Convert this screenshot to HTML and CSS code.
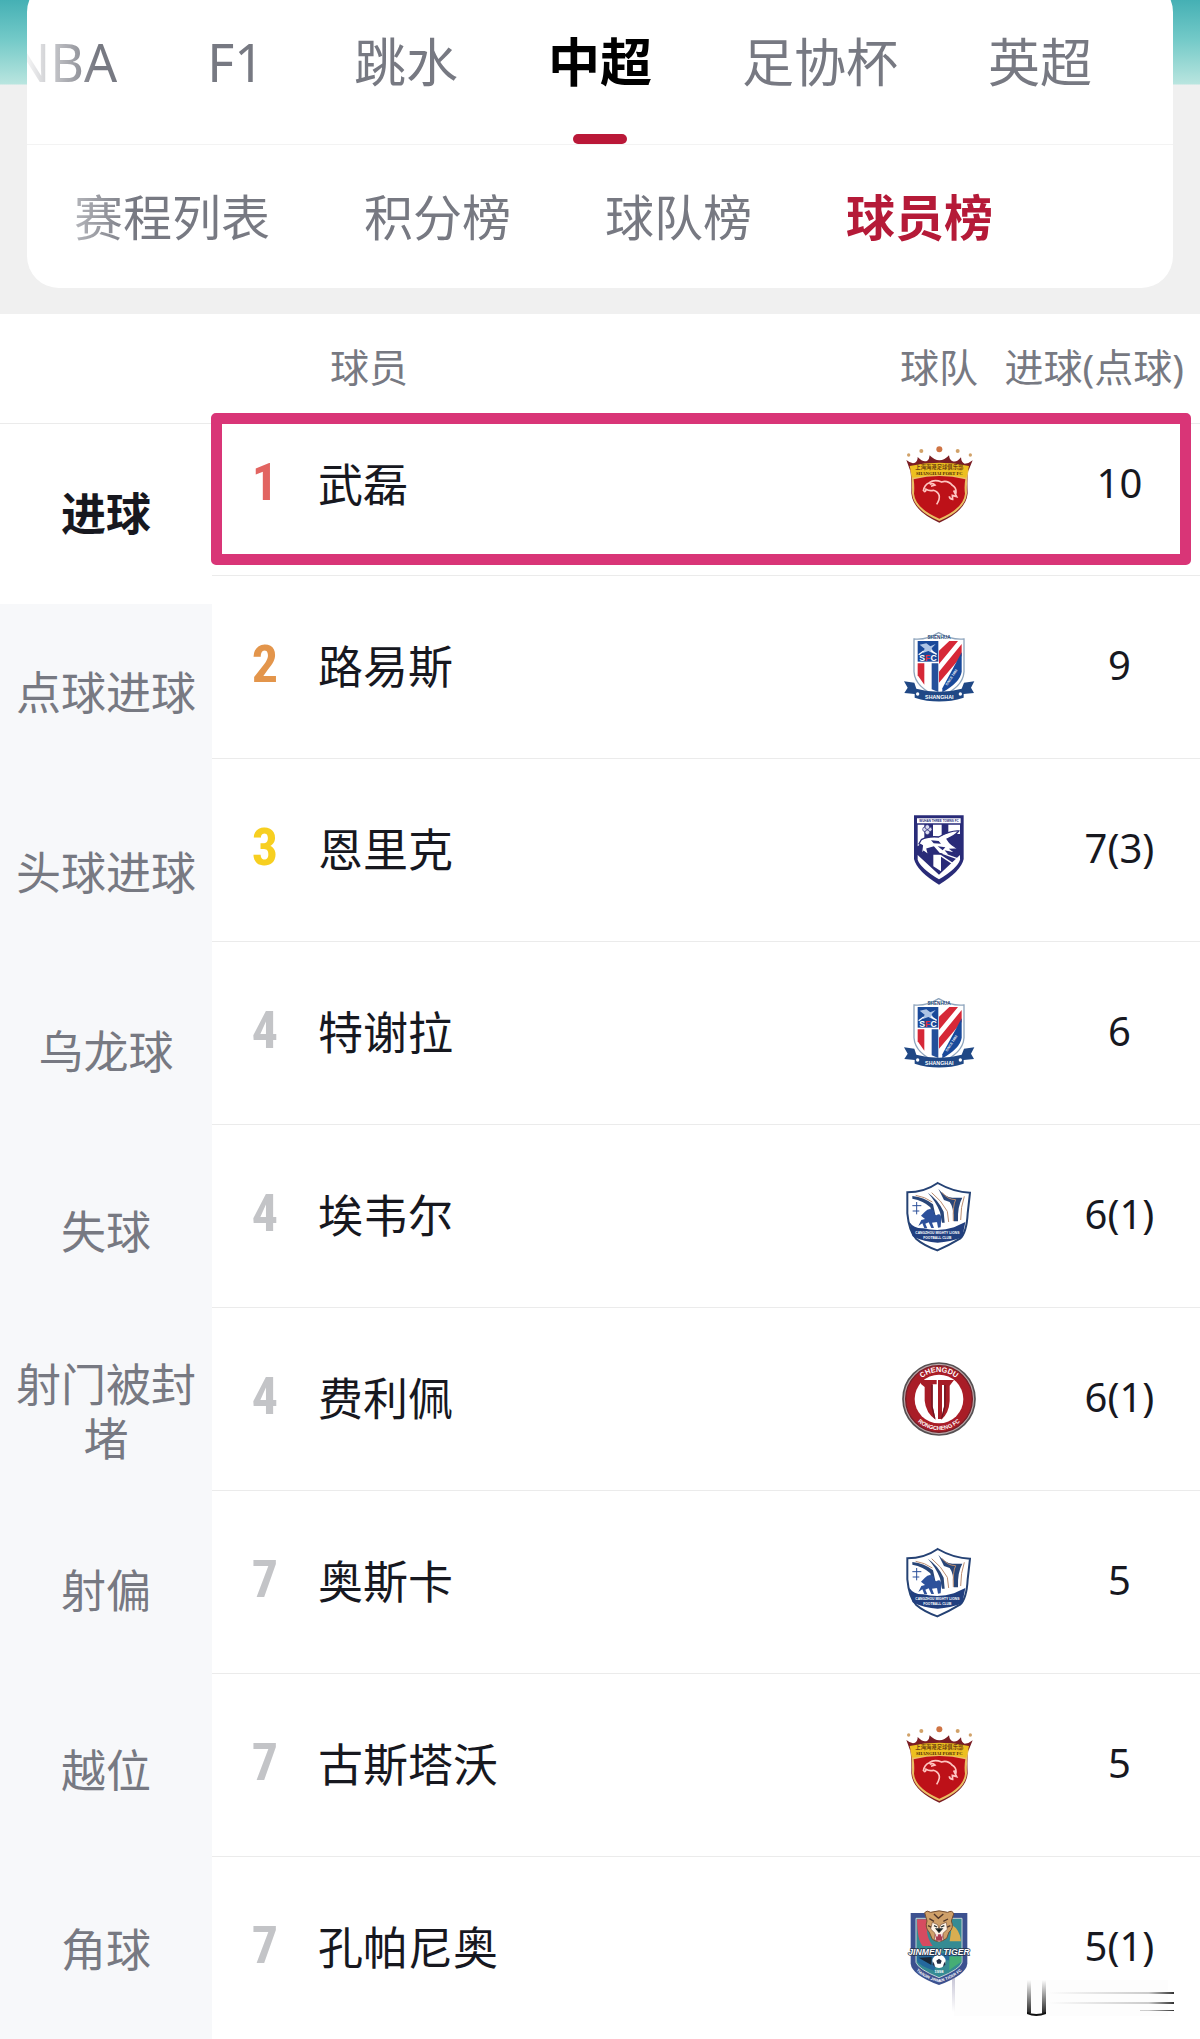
FILE: index.html
```
<!DOCTYPE html>
<html lang="zh-CN">
<head>
  <meta charset="UTF-8" />
  <meta name="viewport" content="width=device-width, initial-scale=1.0" />
  <title>中超球员榜</title>
  <link rel="stylesheet" href="styles.css">
</head>
<body>
<header class="top">
  <div class="card">
    <nav class="tabs" aria-label="赛事">
      <a href="#">NBA</a>
      <a href="#">F1</a>
      <a href="#">跳水</a>
      <a href="#" class="active">中超</a>
      <a href="#">足协杯</a>
      <a href="#">英超</a>
    </nav>
    <nav class="subtabs" aria-label="榜单">
      <a href="#">赛程列表</a>
      <a href="#">积分榜</a>
      <a href="#">球队榜</a>
      <a href="#" class="active">球员榜</a>
    </nav>
  </div>
</header>

<main class="board">
  <aside class="side">
    <div class="side__head"></div>
    <button type="button" class="side__item active">进球</button>
    <button type="button" class="side__item">点球进球</button>
    <button type="button" class="side__item">头球进球</button>
    <button type="button" class="side__item">乌龙球</button>
    <button type="button" class="side__item">失球</button>
    <button type="button" class="side__item">射门被封堵</button>
    <button type="button" class="side__item">射偏</button>
    <button type="button" class="side__item">越位</button>
    <button type="button" class="side__item">角球</button>
  </aside>
  <div class="ranking">
    <table class="rank">
      <thead>
        <tr>
          <th class="rank__no"></th>
          <th class="rank__name">球员</th>
          <th class="rank__team">球队</th>
          <th class="rank__goals">进球(点球)</th>
        </tr>
      </thead>
      <tbody>
        <tr class="marked">
          <td class="rank__no no-1">1</td>
          <td class="rank__name">武磊</td>
          <td class="rank__team">
            <svg class="badge" viewBox="60 45 240 240">
              <g id="port">
                <path d="M82 90Q98 103 108 98Q116 94 116 81Q132 98 145 92Q151 88 152 76Q166 91 181 91Q197 91 210 76Q212 91 221 94Q234 98 246 82Q247 98 257 101Q270 101 281 91L267 125Q264 150 266 190Q262 242 181 278Q101 242 97 190Q98 145 94 123Z" fill="#7b1d23" />
                <path d="M94 119Q181 90 269 119Q262 150 264 190Q260 240 181 273Q103 240 99 190Q100 146 94 119Z" fill="#eabf65" />
                <path d="M104 148Q181 128 259 148Q255 170 258 191Q254 235 181 266Q109 235 105 191Q107 170 104 148Z" fill="#bd1118" />
                <path d="M92 108Q181 88 270 108L262 143Q181 127 100 143Z" fill="#edbf20" />
                <text class="port-cn" x="181" y="118">上海海港足球俱乐部</text>
                <text class="port-en" x="181" y="135">SHANGHAI PORT FC</text>
                <path d="M133 183Q136 163 151 158Q165 147 188 156Q206 150 220 166Q232 173 231 187L224 182L233 200L220 196L221 208Q211 207 211 199M134 183Q140 188 141 178Q151 184 163 181Q193 191 173 223M152 163Q162 158 168 165L156 169" fill="none" stroke="#ffc5c1" stroke-width="5" />
                <g fill="#d1a269"><circle cx="89" cy="75" r="5" /><circle cx="127" cy="63" r="6" /><circle cx="181" cy="58" r="9" fill="#cf7444" /><circle cx="236" cy="63" r="6" /><circle cx="274" cy="75" r="5" /></g>
              </g>
            </svg>
          </td>
          <td class="rank__goals">10</td>
        </tr>
        <tr>
          <td class="rank__no no-2">2</td>
          <td class="rank__name">路易斯</td>
          <td class="rank__team">
            <svg class="badge" viewBox="60 40 240 240">
              <g id="shenhua">
                <path d="M105 76Q142 80 179 57Q218 80 255 76V174Q252 222 180 250Q108 222 105 174Z" fill="#fff" stroke="#8fa5bd" stroke-width="4" />
                <path d="M116 82H178V144H116Z" fill="#19499a" />
                <path d="M116 149H136V213L116 185Z" fill="#d62837" />
                <path d="M158 149H178V235L158 227Z" fill="#24509a" />
                <path d="M180 111L211 82H237L180 151ZM180 174L248 91V127L180 207Z" fill="#d62837" />
                <path d="M190 224L248 116V174Q244 205 190 236Z" fill="#19499a" />
                <path d="M122 93L137 105L131 118L148 112L166 121L158 104L170 91L154 98L142 89Z" fill="#adc4e5" />
                <path d="M119 123L134 112M173 122L156 111" stroke="#fff" stroke-width="4" />
                <text class="shenhua-top" x="180" y="76">SHENHUA</text>
                <text class="shenhua-mid" x="147" y="142">S<tspan fill="#e52d3d">F</tspan>C</text>
                <text class="shenhua-year" x="205" y="216" transform="rotate(-57 205 216)">SINCE 1993</text>
                <path d="M75 203L106 207L112 225Q180 244 248 225L255 207L286 203L276 222L285 238L254 241V252Q180 275 107 252V241L76 238L86 222Z" fill="#204885" />
                <text class="shenhua-band" x="181" y="255">SHANGHAI</text>
                <circle cx="116" cy="241" r="5" fill="#fff" /><circle cx="244" cy="241" r="5" fill="#fff" />
              </g>
            </svg>
          </td>
          <td class="rank__goals">9</td>
        </tr>
        <tr>
          <td class="rank__no no-3">3</td>
          <td class="rank__name">恩里克</td>
          <td class="rank__team">
            <svg class="badge" viewBox="62 46 240 240">
              <path d="M107 62H256V193Q248 230 182 270Q116 230 107 193Z" fill="#292b78" />
              <path d="M116 71H247V86H116Z" fill="#fff" />
              <text class="wuhan-text" x="182" y="82">WUHAN THREE TOWNS FC</text>
              <path d="M118 90H138V140L118 155ZM164 90H190V126H164ZM210 90H245V118H210ZM118 181L182 240L245 181V195Q238 220 182 254Q126 220 118 195ZM165 180H188V230L165 215Z" fill="#fff" />
              <path d="M129 135Q148 124 181 127Q218 107 241 109Q231 123 206 133Q218 154 243 163L217 164L232 176L204 170L216 184L183 176L166 157L146 163L151 181L136 170L129 180L132 153L122 147Z" fill="#fff" stroke="#292b78" stroke-width="4" />
              <path d="M158 137L181 139L188 147L166 146ZM178 155L201 158L193 167Z" fill="#292b78" />
              <path d="M193 176L245 195M187 183L228 210" stroke="#fff" stroke-width="4" />
              <g fill="#dadcf0" stroke="#292b78" stroke-width="2"><circle cx="140" cy="104" r="7" /><circle cx="154" cy="104" r="7" /><circle cx="147" cy="97" r="7" /><circle cx="147" cy="113" r="7" /></g>
            </svg>
          </td>
          <td class="rank__goals">7(3)</td>
        </tr>
        <tr>
          <td class="rank__no">4</td>
          <td class="rank__name">特谢拉</td>
          <td class="rank__team"><svg class="badge" viewBox="60 40 240 240"><use href="#shenhua" /></svg></td>
          <td class="rank__goals">6</td>
        </tr>
        <tr>
          <td class="rank__no">4</td>
          <td class="rank__name">埃韦尔</td>
          <td class="rank__team">
            <svg class="badge" viewBox="66 30 240 240">
              <g id="cangzhou">
                <path d="M91 79Q142 79 182 51Q231 79 279 80L272 142Q269 200 249 218Q216 238 181 253Q140 238 117 218Q96 195 91 142Z" fill="#fff" stroke="#254274" stroke-width="6" />
                <path d="M106 90Q143 94 168 115L180 169L169 166L160 124Q140 104 106 98Z" fill="#294678" />
                <path d="M152 80Q183 100 200 137L203 170H195L189 139Q177 106 152 80Z" fill="#294678" />
                <path d="M184 68Q203 93 226 95H256Q241 121 243 166H230Q231 124 218 108L201 102Z" fill="#294678" />
                <path d="M164 80Q193 103 211 136L215 168M195 79Q212 101 236 101Q227 118 229 165M262 91Q251 122 251 162M116 88Q143 92 166 108" stroke="#bb8d70" stroke-width="3" fill="none" />
                <path d="M143 138Q158 122 171 135Q168 145 178 148Q191 139 193 157L191 184L183 185L180 168L165 170L171 186H163L155 169L145 173L151 187H142L136 172L124 180L133 162L144 159L132 149Z" fill="#2d519b" />
                <path d="M106 119H133M107 135H127M119 108V145" stroke="#2d519b" stroke-width="3" />
                <path d="M97 168Q111 188 138 187Q187 198 231 184L265 168L256 214Q219 229 182 230Q142 229 107 211Z" fill="#213f7f" />
                <text class="cang-text" x="181" y="203">CANGZHOU MIGHTY LIONS</text>
                <text class="cang-text" x="181" y="220">FOOTBALL CLUB</text>
              </g>
            </svg>
          </td>
          <td class="rank__goals">6(1)</td>
        </tr>
        <tr>
          <td class="rank__no">4</td>
          <td class="rank__name">费利佩</td>
          <td class="rank__team">
            <svg class="badge" viewBox="62 40 240 240">
              <circle cx="182" cy="160" r="108" fill="#b9a7a9" stroke="#555052" stroke-width="5" />
              <circle cx="182" cy="160" r="100" fill="#a91d27" stroke="#791e27" stroke-width="4" />
              <circle cx="182" cy="160" r="73" fill="#fff" />
              <path d="M128 103H175V116H163V182L172 222Q142 201 139 165V124L128 115ZM179 103H227L214 120V166Q212 203 188 223L197 182V118H191V220H179Z" fill="#a71c26" />
              <path d="M161 117V183L169 218M200 118V181L190 218" stroke="#681522" stroke-width="4" fill="none" />
              <path id="arc-top" d="M101 160A81 81 0 0 1 263 160" fill="none" />
              <path id="arc-bottom" d="M89 160A93 93 0 0 0 275 160" fill="none" />
              <text class="cd-top"><textPath href="#arc-top" startOffset="50%">CHENGDU</textPath></text>
              <text class="cd-bottom"><textPath href="#arc-bottom" startOffset="50%">RONGCHENG FC</textPath></text>
            </svg>
          </td>
          <td class="rank__goals">6(1)</td>
        </tr>
        <tr>
          <td class="rank__no">7</td>
          <td class="rank__name">奥斯卡</td>
          <td class="rank__team"><svg class="badge" viewBox="66 30 240 240"><use href="#cangzhou" /></svg></td>
          <td class="rank__goals">5</td>
        </tr>
        <tr>
          <td class="rank__no">7</td>
          <td class="rank__name">古斯塔沃</td>
          <td class="rank__team"><svg class="badge" viewBox="60 45 240 240"><use href="#port" /></svg></td>
          <td class="rank__goals">5</td>
        </tr>
        <tr>
          <td class="rank__no">7</td>
          <td class="rank__name">孔帕尼奥</td>
          <td class="rank__team">
            <svg class="badge" viewBox="60 51 240 240">
              <path d="M95 66H265V218Q261 252 180 282Q99 252 95 218Z" fill="#3c518f" />
              <path d="M111 82H249V214Q244 234 180 260Q117 234 111 214Z" fill="#358b93" stroke="#c5d2d4" stroke-width="3" />
              <path d="M114 85H153Q132 125 161 165H131Q115 150 114 85Z" fill="#d64b60" />
              <path d="M219 102Q243 116 246 151H212Z" fill="#d8ae51" />
              <path d="M114 187H246V211L217 234L210 208L178 207L165 239Q119 223 114 210Z" fill="#24689d" />
              <path d="M211 196H247V212L211 238Z" fill="#46ad75" />
              <path d="M119 200L158 198L157 222Z" fill="#172838" />
              <path d="M137 65Q143 56 155 64Q180 55 206 64Q221 56 224 69L217 90Q226 111 210 123L203 142Q180 159 160 145L151 124Q137 110 144 90Z" fill="#cfa069" stroke="#755034" stroke-width="3" />
              <path d="M165 69L178 82L193 69M151 83L165 91M207 84L193 91M147 104L158 109M214 104L203 109" fill="none" stroke="#4f3529" stroke-width="4" />
              <path d="M160 94L176 101L180 114L185 101L202 94L205 115L192 127L194 146L180 153L166 145L168 127L155 114Z" fill="#fff3e6" stroke="#77513b" stroke-width="2" />
              <path d="M165 104L174 108M196 104L186 108M172 114H189L180 124Z" stroke="#273132" stroke-width="4" />
              <path d="M168 130H193L189 149H172Z" fill="#aa3e51" />
              <path d="M170 130L174 139L178 130H185L189 139L191 130" fill="#fff" />
              <circle cx="180" cy="211" r="20" fill="#fff" />
              <path d="M180 203L188 209L185 218H175L172 209ZM161 210L166 219L168 228L161 221ZM199 210L194 219L192 228L199 221Z" fill="#222d45" />
              <text class="jm-title" x="180" y="192">JINMEN TIGER</text>
              <path id="jm-arc" d="M98 205Q100 252 180 274Q260 252 262 205" fill="none" />
              <text class="jm-small"><textPath href="#jm-arc" startOffset="50%">TIANJIN JINMEN TIGER FC</textPath></text>
              <text class="jm-small" x="180" y="246">1998</text>
            </svg>
          </td>
          <td class="rank__goals">5(1)</td>
        </tr>
      </tbody>
    </table>
    <svg class="smudge" viewBox="0 0 224 40" aria-hidden="true">
      <defs>
        <linearGradient id="fade-down" x2="0" y2="1"><stop stop-color="#111" stop-opacity="0" /><stop offset="1" stop-color="#111" stop-opacity=".9" /></linearGradient>
        <linearGradient id="fade-right"><stop stop-color="#333" stop-opacity="0" /><stop offset=".8" stop-color="#333" stop-opacity=".25" /><stop offset="1" stop-color="#333" /></linearGradient>
        <linearGradient id="fade-up" x2="0" y2="1"><stop stop-color="#77739a" stop-opacity=".4" /><stop offset="1" stop-color="#77739a" stop-opacity="0" /></linearGradient>
      </defs>
      <path d="M4 2H218V38H4Z" fill="#fdfdfd" />
      <path d="M2 0H5V34H2Z" fill="url(#fade-up)" />
      <path d="M77 2H81V35H77ZM92 2H96V35H92Z" fill="url(#fade-down)" />
      <path d="M77 34Q86 38 96 34V36Q86 40 77 36Z" fill="#111" />
      <path d="M98 14H224V16H98ZM98 24H224V26H98ZM190 32H224V33H190Z" fill="url(#fade-right)" />
    </svg>
  </div>
</main>
</body>
</html>
```
FILE: styles.css
```
* {
  box-sizing: border-box;
}
body {
  margin: 0;
  background: #fff;
  color: #17181f;
  font-family: "Noto Sans", "Noto Sans CJK SC", sans-serif;
}
a {
  color: inherit;
  text-decoration: none;
}

/* tabs */
.top {
  padding: 0 27px 26px;
  background: linear-gradient(#45b0b4 0, #74cac8 40px, #b9e5df 84px, #f0f0f0 85px);
  overflow: hidden;
}
.card {
  margin-top: -20px;
  padding-top: 20px;
  border-radius: 32px;
  background: #fff;
  overflow: hidden;
  color: #777982;
}
.tabs,
.subtabs {
  display: flex;
  white-space: nowrap;
}
.tabs {
  justify-content: flex-end;
  gap: 90px;
  height: 145px;
  padding-right: 81px;
  border-bottom: 1px solid #f3f3f3;
  font-size: 52px;
  line-height: 124px;
}
.tabs a:first-child {
  background: linear-gradient(90deg, #fff 10%, #777982 80%);
  background-clip: text;
  color: transparent;
}
.tabs .active {
  position: relative;
  color: #000;
  font-weight: bold;
}
.tabs .active::after {
  content: "";
  position: absolute;
  left: 50%;
  bottom: 0;
  width: 54px;
  height: 10px;
  margin-left: -27px;
  border-radius: 5px;
  background: #ba1838;
}
.subtabs {
  gap: 94px;
  height: 143px;
  padding-left: 47px;
  font-size: 49px;
  line-height: 145px;
}
.subtabs a:first-child {
  background: linear-gradient(90deg, #b4b5ba, #777982 30%);
  background-clip: text;
  color: transparent;
}
.subtabs .active {
  color: #b51a38;
  font-weight: bold;
}

/* ranking */
.board {
  display: grid;
  grid-template-columns: 212px 1fr;
}
.side {
  display: flex;
  flex-direction: column;
  background: #f7f8fa;
}
.side__head {
  height: 110px;
  border-bottom: 1px solid #ebebeb;
  background: #fff;
}
.side__item {
  flex: 1;
  padding: 0 15px;
  border: none;
  background: none;
  color: #777982;
  font: inherit;
  font-size: 45px;
  line-height: 54px;
}
.side__item.active {
  background: #fff;
  color: #17181f;
  font-weight: bold;
}
.ranking {
  position: relative;
}
.rank {
  width: 100%;
  border-collapse: separate;
  border-spacing: 0;
  table-layout: fixed;
}
.rank th,
.rank td {
  padding: 0 0 5px;
  border-bottom: 1px solid #ebebeb;
}
.rank th {
  height: 110px;
  padding-bottom: 8px;
  color: #777982;
  font-size: 39px;
  font-weight: normal;
  white-space: nowrap;
}
.rank td {
  height: 183px;
}
.rank__no {
  width: 106px;
  color: #c3c4c7;
  font-family: "Roboto Condensed", "Open Sans Condensed", "Noto Sans Condensed", Roboto, sans-serif;
  font-size: 52px;
  font-weight: bold;
  text-align: center;
}
.no-1 {
  color: #e26461;
}
.no-2 {
  color: #e3954b;
}
.no-3 {
  color: #f7cf20;
}
.rank__name {
  font-size: 45px;
  text-align: left;
}
.rank th.rank__name {
  padding-left: 12px;
}
.rank__team {
  width: 120px;
  text-align: center;
}
.rank td.rank__team {
  padding-bottom: 0;
}
.rank__goals {
  width: 201px;
  font-size: 40px;
  text-align: center;
}
.rank th.rank__goals {
  padding-right: 16px;
  text-align: right;
}
.rank td.rank__goals {
  padding-left: 40px;
}

/* first place */
.marked {
  position: relative;
}
.rank .marked td {
  height: 152px;
  padding-bottom: 34px;
}
.rank .marked .rank__team {
  padding-bottom: 30px;
}
.marked .rank__no::after {
  content: "";
  position: absolute;
  top: -11px;
  right: 9px;
  bottom: 11px;
  left: -1px;
  border: 11px solid #d93577;
  border-radius: 5px;
}
.badge {
  display: block;
  width: 80px;
  height: 80px;
  margin: 0 auto;
}
.smudge {
  position: absolute;
  right: 26px;
  bottom: 22px;
  width: 224px;
  height: 40px;
}

/* lettering on the badges */
.badge text {
  font-family: "Liberation Sans", "Noto Sans CJK SC", sans-serif;
  font-weight: bold;
  text-anchor: middle;
  fill: #fff;
}
.badge .port-cn {
  font-size: 16px;
  fill: #70400f;
}
.badge .port-en {
  font-family: "Liberation Serif", serif;
  font-size: 14px;
  fill: #4d2508;
}
.badge .shenhua-top {
  font-size: 14px;
  fill: #213f70;
}
.badge .shenhua-mid {
  font-size: 26px;
}
.badge .shenhua-year {
  font-size: 10px;
  text-anchor: start;
}
.badge .shenhua-band {
  font-size: 16px;
}
.badge .wuhan-text {
  font-size: 9px;
  fill: #292b78;
}
.badge .cang-text {
  font-size: 10px;
}
.badge .cd-top {
  font-size: 22px;
}
.badge .cd-bottom {
  font-size: 17px;
}
.badge .jm-title {
  font-size: 26px;
  font-style: italic;
  stroke: #26324b;
  stroke-width: 4px;
  paint-order: stroke;
}
.badge .jm-small {
  font-size: 12px;
}
```
